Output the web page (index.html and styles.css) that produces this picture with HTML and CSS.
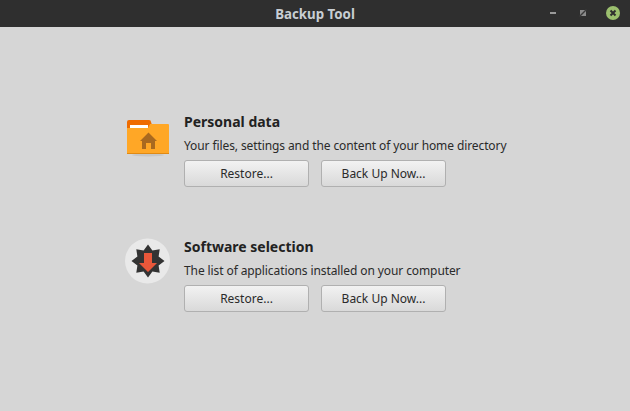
FILE: index.html
```html
<!DOCTYPE html>
<html lang="en">
<head>
<meta charset="utf-8">
<title>Backup Tool</title>
<link rel="stylesheet" href="styles.css">
</head>
<body>
<div class="window">
  <header class="titlebar">
    <span class="title">Backup Tool</span>
    <div class="controls">
      <svg class="ctl" width="16" height="16" viewBox="0 0 16 16"><rect x="3" y="7" width="6" height="2" fill="#9a9a9a"/></svg>
      <svg class="ctl" width="16" height="16" viewBox="0 0 16 16"><rect x="4" y="5" width="6" height="6" fill="#8a8a8a"/><path d="M3.500 11.500l7-7" stroke="#3a3a3a" stroke-width="1.400"/></svg>
      <svg class="ctl" width="16" height="16" viewBox="0 0 16 16"><circle cx="8" cy="8" r="7" fill="#9bbf6e"/><path d="M5.500 5.500l5 5M10.500 5.500l-5 5" stroke="#2e2e2e" stroke-width="2"/></svg>
    </div>
  </header>
  <main class="content">
    <section class="row">
      <svg class="icon" width="48" height="48" viewBox="0 0 48 48">
        <ellipse cx="24" cy="44" rx="16" ry="1.500" fill="#c6c6c6"/>
        <path d="M3 17v-6a2 2 0 0 1 2-2h20a2 2 0 0 1 2 2l1 3-2 3z" fill="#ef6c00"/>
        <rect x="6" y="14" width="18" height="3" fill="#fff"/>
        <path d="M3 17h21l2-4h18a1 1 0 0 1 1 1v29H3z" fill="#ffa726"/>
        <rect x="3" y="42" width="42" height="1" fill="#e08a14"/>
        <path d="M24.500 21.500L16 30h2v8h4v-6h5v6h4v-8h2z" fill="#a9691f"/>
      </svg>
      <div class="info">
        <h2>Personal data</h2>
        <p>Your files, settings and the content of your home directory</p>
        <div class="buttons">
          <button>Restore...</button>
          <button>Back Up Now...</button>
        </div>
      </div>
    </section>
    <section class="row">
      <svg class="icon" width="48" height="48" viewBox="0 0 48 48">
        <circle cx="23.500" cy="25" r="22.500" fill="#e9e9e9"/>
        <path d="M24 8.500L28.400 14.400 35.700 13.300 34.600 20.600 40.500 25 34.600 29.400 35.700 36.700 28.400 35.600 24 41.500 19.600 35.600 12.300 36.700 13.400 29.400 7.500 25 13.400 20.600 12.300 13.300 19.600 14.400z" fill="#333"/>
        <path d="M20 17h8v10h5l-9 9-9-9h5z" fill="#e9573a"/>
      </svg>
      <div class="info">
        <h2>Software selection</h2>
        <p>The list of applications installed on your computer</p>
        <div class="buttons">
          <button>Restore...</button>
          <button>Back Up Now...</button>
        </div>
      </div>
    </section>
  </main>
</div>
</body>
</html>
```
FILE: styles.css
```css
* { box-sizing: border-box; }
html, body { margin: 0; height: 100%; }
body { font-family: "Noto Sans", sans-serif; font-size: 12px; color: #222; background: #d6d6d6; overflow: hidden; }
.window { width: 630px; height: 411px; display: flex; flex-direction: column; }
.titlebar { height: 27px; flex: none; background: #2f2f2f; position: relative; display: flex; align-items: center; justify-content: center; }
.title { color: #c8ced3; font-weight: 700; font-size: 13.3px; }
.controls { position: absolute; right: 9px; top: 5px; display: flex; gap: 13px; }
.ctl { display: block; }
.content { flex: 1; padding: 79px 0 0 124px; display: flex; flex-direction: column; gap: 38px; }
.row { display: flex; gap: 12px; align-items: flex-start; height: 87px; }
.icon { flex: none; margin-top: 5px; }
.info { display: flex; flex-direction: column; }
h2 { margin: 0; font-size: 14px; font-weight: 700; line-height: 19px; color: #222; height: 24px; padding-top: 6px; }
p { margin: 0; font-size: 12px; letter-spacing: -0.1px; line-height: 16px; height: 30px; padding-top: 8px; color: #2a2a2a; white-space: nowrap; }
.buttons { display: flex; gap: 12px; }
button { width: 125px; height: 27px; padding: 0 0 1px; font: 12px "Noto Sans", sans-serif; color: #2a2a2a; border: 1px solid #b0b0b0; border-radius: 3px; background: linear-gradient(#f2f2f2, #d9d9d9); }
```
